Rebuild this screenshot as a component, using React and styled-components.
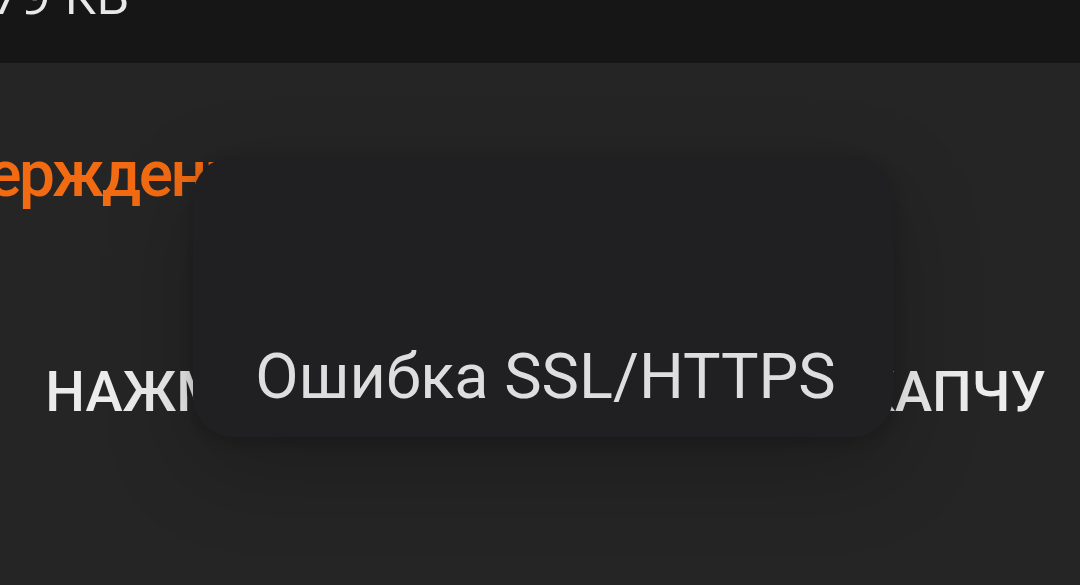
import React from "react";
import styled, { createGlobalStyle } from "styled-components";

const GlobalStyle = createGlobalStyle`
  html, body {
    margin: 0;
    padding: 0;
    background: #252525;
  }
  body {
    width: 1080px;
    height: 585px;
    overflow: hidden;
  }
`;

const Screen = styled.div`
  position: relative;
  width: 1080px;
  height: 585px;
  display: flex;
  flex-direction: column;
  background: #252525;
  overflow: hidden;
  font-family: Roboto, "Noto Sans", sans-serif;
`;

const TopBar = styled.div`
  height: 63px;
  flex-shrink: 0;
  background: #161616;
  overflow: hidden;
`;

const FileSize = styled.div`
  margin: -32px 0 0 -9px;
  font-family: "Open Sans", "Noto Sans", sans-serif;
  font-size: 52px;
  line-height: 1;
  color: #e8e8e8;
  white-space: nowrap;
`;

const Content = styled.div`
  flex: 1;
  display: flex;
  flex-direction: column;
`;

const Title = styled.h1`
  margin: 80px 0 0 -187px;
  font-size: 64px;
  font-weight: 500;
  letter-spacing: -2.5px;
  line-height: 1;
  color: #f26b12;
  white-space: nowrap;
`;

const CaptchaButton = styled.div`
  margin-top: 157px;
  padding-left: 11px;
  display: flex;
  justify-content: center;
  font-size: 56px;
  font-weight: 500;
  word-spacing: 18px;
  line-height: 1;
  color: #ececec;
  white-space: nowrap;
`;

const Toast = styled.div`
  position: absolute;
  left: 193px;
  top: 157px;
  width: 700px;
  height: 280px;
  box-sizing: border-box;
  padding: 0 0 29px 5px;
  display: flex;
  flex-direction: column;
  justify-content: flex-end;
  align-items: center;
  border-radius: 40px;
  background: #202022;
  box-shadow: 0 30px 90px rgba(0, 0, 0, 0.22), 0 4px 14px rgba(0, 0, 0, 0.18);
`;

const ToastText = styled.div`
  font-size: 63px;
  font-weight: 400;
  line-height: 1;
  color: #dedede;
  white-space: nowrap;
`;

export default function App() {
  return (
    <>
      <GlobalStyle />
      <Screen>
        <TopBar>
          <FileSize>79 KB</FileSize>
        </TopBar>
        <Content>
          <Title>Подтверждение</Title>
          <CaptchaButton>НАЖМИТЕ, ЧТОБЫ ПРОЙТИ КАПЧУ</CaptchaButton>
        </Content>
        <Toast>
          <ToastText>Ошибка SSL/HTTPS</ToastText>
        </Toast>
      </Screen>
    </>
  );
}
